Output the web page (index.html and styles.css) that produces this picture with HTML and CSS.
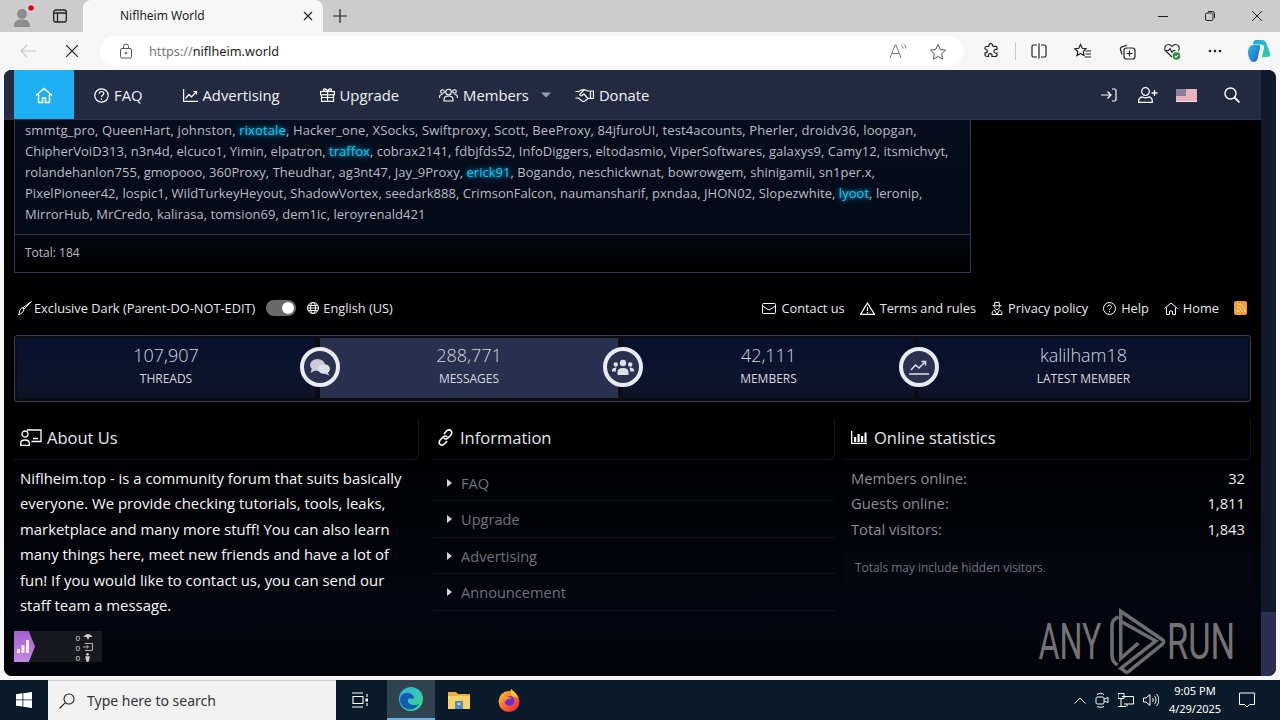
FILE: index.html
```html
<!DOCTYPE html>
<html>
<head>
  <meta charset="utf-8">
  <title>Niflheim World</title>
  <link rel="stylesheet" href="styles.css">
</head>
<body>
  <div class="tabstrip">
    <div class="strip-left">
      <svg class="profile" width="26" height="26" viewBox="0 0 26 26"><circle cx="12" cy="11" r="5" fill="#8c8c8c"/><path d="M4 24c0-6 3-7.500 8-7.500s8 1.500 8 7.500z" fill="#8c8c8c"/><circle cx="21" cy="5" r="4" fill="#ddd"/><circle cx="21" cy="5" r="2.800" fill="#e0000f"/></svg>
      <svg class="vtabs" width="16" height="16" viewBox="0 0 16 16" fill="none" stroke="#222" stroke-width="1.300"><rect x="1.700" y="2" width="12.600" height="12" rx="2"/><path d="M1.700 5h12.600M5.500 5v9" /></svg>
    </div>
    <div class="tab">
      <span class="tab-title">Niflheim World</span>
      <svg width="10" height="10" viewBox="0 0 10 10" stroke="#222" stroke-width="1.200"><path d="M1 1l8 8M9 1l-8 8"/></svg>
    </div>
    <svg class="newtab" width="16" height="16" viewBox="0 0 16 16" stroke="#222" stroke-width="1.200"><path d="M8 1v14M1 8h14"/></svg>
    <div class="winctl">
      <svg width="12" height="12" viewBox="0 0 12 12" stroke="#222"><path d="M1 6.500h10"/></svg>
      <svg width="12" height="12" viewBox="0 0 12 12" fill="none" stroke="#222"><rect x="1.500" y="3" width="7.500" height="7.500" rx="1.500"/><path d="M4 1.500h4.500a2 2 0 0 1 2 2v4.500"/></svg>
      <svg width="12" height="12" viewBox="0 0 12 12" stroke="#222"><path d="M1 1l10 10M11 1L1 11"/></svg>
    </div>
  </div>

  <div class="toolbar">
    <svg class="t-back" width="18" height="16" viewBox="0 0 18 16" fill="none" stroke="#c9c9c9" stroke-width="1.200"><path d="M17 8H2M8 2L2 8l6 6"/></svg>
    <svg class="t-stop" width="12" height="12" viewBox="0 0 12 12" stroke="#222" stroke-width="1.200"><path d="M0 0l12 12M12 0L0 12"/></svg>
    <div class="addressbar">
      <svg class="lock" width="14" height="16" viewBox="0 0 14 16" fill="none" stroke="#555"><rect x="1.500" y="5.500" width="11" height="9.500" rx="1.500"/><path d="M4.500 5.500V3.500a2.500 2.500 0 0 1 5 0v2"/><circle cx="7" cy="10" r=".8" fill="#555"/></svg>
      <span class="url"><span class="url-scheme">https://</span>niflheim.world</span>
      <div class="addr-actions">
        <svg width="18" height="16" viewBox="0 0 18 16" fill="none" stroke="#777"><path d="M1 15L6 2h1l5 13M3 10.500h7"/><path d="M12 2c1.500.8 2 2 2 3.500M14.500 1c1.500 1 2.500 2.500 2.500 4.500"/></svg>
        <svg width="18" height="17" viewBox="0 0 18 17" fill="none" stroke="#555"><path d="M9 1.500l2.300 4.900 5.200.7-3.800 3.700.9 5.300L9 13.500l-4.600 2.600.9-5.300L1.500 7.100l5.200-.7z"/></svg>
      </div>
    </div>
    <div class="toolbar-icons">
      <svg width="18" height="18" viewBox="0 0 18 18" fill="none" stroke="#222" stroke-width="1.200"><path d="M7 2.500c1-1.500 3.500-1 3.500.8 0 .7.500 1 1 1h2a1.500 1.500 0 0 1 1.500 1.500v1.700c-1.800-.5-3 .5-3 1.800s1.200 2.300 3 1.800v1.400a2 2 0 0 1-2 2H10c.5-1.800-.5-2.800-1.800-2.800S6 12.700 6.500 14.500H5a2 2 0 0 1-2-2V11c1.500 0 2.300-1 2.300-2S4.500 7 3 7V6a1.500 1.500 0 0 1 1.500-1.500H6c.8 0 1.300-1 1-2z"/></svg>
      <span class="tb-sep"></span>
      <svg width="16" height="16" viewBox="0 0 16 16" fill="none" stroke="#222" stroke-width="1.200"><path d="M6 2H2.500a1.500 1.500 0 0 0-1.500 1.500v9A1.500 1.500 0 0 0 2.500 14H6M10 2h3.500A1.500 1.500 0 0 1 15 3.500v9a1.500 1.500 0 0 1-1.500 1.500H10M8 .5v15"/></svg>
      <svg width="18" height="17" viewBox="0 0 18 17" fill="none" stroke="#222" stroke-width="1.200"><path d="M6.500 1.500l1.800 3.800 3.700.5-2.700 2.700.7 4-3.500-2-3.500 2 .7-4L1 5.800l3.800-.5zM11.500 8h5.500M11.500 11h5.500M11 14h6" /></svg>
      <svg width="17" height="17" viewBox="0 0 17 17" fill="none" stroke="#222" stroke-width="1.200"><path d="M3 11.500L1.500 6.500c-.4-1.300.3-2.400 1.400-2.700L8 2.200"/><rect x="5" y="5" width="11" height="11" rx="2.500"/><path d="M10.500 7.500v6M7.500 10.500h6"/></svg>
      <svg width="18" height="18" viewBox="0 0 18 18" fill="none" stroke="#222" stroke-width="1.100"><path d="M9 15L2.800 9C.5 6.500 2 2.500 5.500 2.500 7.300 2.500 8.300 3.500 9 4.500c.7-1 1.700-2 3.500-2C16 2.500 17.500 6.500 15.200 9"/><path d="M1.500 8.500h4l1.500-2 2 4 1.300-2h2"/><circle cx="13.500" cy="14" r="3.800" fill="#2b8a3e" stroke="none"/><path d="M11.800 14l1.300 1.300 2.200-2.400" stroke="#fff"/></svg>
      <svg width="14" height="4" viewBox="0 0 14 4" fill="#222"><circle cx="2" cy="2" r="1.300"/><circle cx="7" cy="2" r="1.300"/><circle cx="12" cy="2" r="1.300"/></svg>
      <svg class="copilot" width="24" height="24" viewBox="0 0 24 24"><defs><linearGradient id="cpA" x1="0" y1="0" x2="1" y2="1"><stop offset="0" stop-color="#1fa9e6"/><stop offset="1" stop-color="#2fd0a0"/></linearGradient><linearGradient id="cpB" x1="0" y1="0" x2="1" y2="1"><stop offset="0" stop-color="#2ac0d8"/><stop offset="1" stop-color="#2258d8"/></linearGradient></defs><path d="M9 1h6c3 0 4 2 5 5l3 8c.8 2.500-.5 4-3 4h-5l2-9c.5-2-1-3.500-3-3.500H6C6 3 7 1 9 1z" fill="url(#cpA)"/><path d="M1 13c0-4 2.500-7 5-7h5c2 0 2.500 1 2 3l-2.500 11c-.5 2-2 3-4 3-3.500 0-5.500-6-5.500-10z" fill="url(#cpB)"/></svg>
    </div>
  </div>

  <div class="viewport">
    <div class="page">
      <div class="site">
        <nav class="nav">
          <a class="nav-home">
            <svg width="18" height="17" viewBox="0 0 18 17" fill="none" stroke="#fff" stroke-width="1.500"><path d="M1 8.500L9 1.500l8 7M3.500 7v8.500h4v-4.500h3v4.500h4V7"/></svg>
          </a>
          <a class="nav-item">
            <svg width="15" height="15" viewBox="0 0 15 15" fill="none" stroke="#fff" stroke-width="1.200"><circle cx="7.500" cy="7.500" r="6.700"/><path d="M5.300 5.800c0-3 4.500-3 4.500-.3 0 1.700-2.300 1.700-2.300 3.500"/><path d="M7.500 10.300v1.400"/></svg>
            FAQ
          </a>
          <a class="nav-item">
            <svg width="15" height="13" viewBox="0 0 15 13" fill="none" stroke="#fff" stroke-width="1.200"><path d="M.6 0v12.400H15"/><path d="M2.500 9.500l3.500-4 2.500 2.500 4.500-5"/><path d="M10.500 2.500H13.500V5.500"/></svg>
            Advertising
          </a>
          <a class="nav-item">
            <svg width="15" height="14" viewBox="0 0 15 14" fill="none" stroke="#fff" stroke-width="1.200"><rect x=".6" y="3.500" width="13.800" height="3.300"/><path d="M1.500 6.800v6.600h12V6.800M7.500 3.500v10M1.500 9.500h12"/><path d="M7.500 3.500C5 3.500 3.500 3 3.500 1.800 3.500.3 6.500.3 7.500 3.500c1-3.200 4-3.200 4-1.700 0 1.200-1.500 1.700-4 1.700z"/></svg>
            Upgrade
          </a>
          <a class="nav-item nav-members">
            <svg width="19" height="14" viewBox="0 0 19 14" fill="none" stroke="#fff" stroke-width="1.100"><circle cx="9.500" cy="4" r="2.800"/><path d="M5 13v-1.500C5 9 7 8 9.500 8s4.500 1 4.500 3.500V13z"/><circle cx="3.500" cy="3.500" r="1.800"/><circle cx="15.500" cy="3.500" r="1.800"/><path d="M.6 10V8.500c0-1.500 1-2 2.900-2M18.400 10V8.500c0-1.500-1-2-2.900-2"/></svg>
            Members
            <svg class="caret" width="10" height="6" viewBox="0 0 10 6" fill="#9a9db0"><path d="M0 .5h10L5 5.500z"/></svg>
          </a>
          <a class="nav-item">
            <svg width="19" height="13" viewBox="0 0 19 13" fill="none" stroke="#fff" stroke-width="1.200"><path d="M.5 2.500h3l3-1.500c1.500-.5 3-.5 4 0l2 1h2.500M.5 9h3l3.500 3c1 .5 2 .5 3 0l3-2.500-4-4.500-2 1.500c-1.500 1-3-1-1.500-2L9 1"/><path d="M15.500 2h3v7.500h-3zM13 9.500h2.500"/></svg>
            Donate
          </a>
          <div class="nav-right">
            <svg width="16" height="14" viewBox="0 0 16 14" fill="none" stroke="#fff" stroke-width="1.200"><path d="M0 7h9.500M6.500 3.500L10 7l-3.500 3.500M11 1h2.500A1.500 1.500 0 0 1 15 2.500v9a1.500 1.500 0 0 1-1.500 1.500H11"/></svg>
            <svg class="nav-user" width="20" height="16" viewBox="0 0 20 16" fill="none" stroke="#fff" stroke-width="1.300"><circle cx="7.500" cy="4.500" r="3.800"/><path d="M.7 15.300v-1.500c0-2.300 2-3.800 3.500-3.800 1 .5 2 .8 3.300.8s2.300-.3 3.300-.8c1.500 0 3.500 1.500 3.500 3.800v1.500zM16.500 3v6M13.500 6h6"/></svg>
            <svg class="flag" width="21" height="13" viewBox="0 0 21 13"><rect width="21" height="13" fill="#f3dede"/><path d="M0 1h21M0 3h21M0 5h21M0 7h21M0 9h21M0 11h21" stroke="#e0868f" stroke-width="1"/><rect width="10" height="7" fill="#8a7f9e"/></svg>
            <svg class="nav-search" width="16" height="16" viewBox="0 0 16 16" fill="none" stroke="#fff" stroke-width="1.400"><circle cx="6.500" cy="6.500" r="5.500"/><path d="M10.500 10.500L15.500 15.500" stroke-width="1.800"/></svg>
          </div>
        </nav>

        <main class="main">
          <section class="online-panel">
            <div class="online-list">
              <div class="online-line"><span>smmtg_pro, QueenHart, johnston, </span><span class="glow">rixotale</span><span>, Hacker_one, XSocks, Swiftproxy, Scott, BeeProxy, 84jfuroUI, test4acounts, Pherler, droidv36, loopgan,</span></div>
              <div class="online-line"><span>ChipherVoiD313, n3n4d, elcuco1, Yimin, elpatron, </span><span class="glow">traffox</span><span>, cobrax2141, fdbjfds52, InfoDiggers, eltodasmio, ViperSoftwares, galaxys9, Camy12, itsmichvyt,</span></div>
              <div class="online-line"><span>rolandehanlon755, gmopooo, 360Proxy, Theudhar, ag3nt47, Jay_9Proxy, </span><span class="glow">erick91</span><span>, Bogando, neschickwnat, bowrowgem, shinigamii, sn1per.x,</span></div>
              <div class="online-line"><span>PixelPioneer42, lospic1, WildTurkeyHeyout, ShadowVortex, seedark888, CrimsonFalcon, naumansharif, pxndaa, JHON02, Slopezwhite, </span><span class="glow">lyoot</span><span>, leronip,</span></div>
              <div class="online-line"><span>MirrorHub, MrCredo, kalirasa, tomsion69, dem1ic, leroyrenald421</span></div>
            </div>
            <div class="online-total">Total: 184</div>
          </section>

          <div class="foot-row">
            <div class="foot-left">
              <span class="foot-link">
                <svg width="14" height="14" viewBox="0 0 14 14" fill="none" stroke="#fff"><path d="M13.500.5L6 8 4.800 6.800zM6 8c-.5 3-3 5.500-5.500 5.500C2 12 .5 10 3 7.500c1-1 1.800-.7 3 .5z"/></svg>
                Exclusive Dark (Parent-DO-NOT-EDIT)
              </span>
              <span class="switch"><span class="knob"></span></span>
              <span class="foot-link">
                <svg width="12" height="12" viewBox="0 0 12 12" fill="none" stroke="#fff"><circle cx="6" cy="6" r="5.500"/><ellipse cx="6" cy="6" rx="2.500" ry="5.500"/><path d="M.5 6h11M1.200 3.500h9.600M1.200 8.500h9.600"/></svg>
                English (US)
              </span>
            </div>
            <div class="foot-right">
              <span class="foot-link"><svg width="14" height="11" viewBox="0 0 14 11" fill="none" stroke="#fff"><rect x=".5" y=".5" width="13" height="10" rx="1"/><path d="M.5 3l6.500 4 6.500-4"/></svg>Contact us</span>
              <span class="foot-link"><svg width="15" height="13" viewBox="0 0 15 13" fill="none" stroke="#fff" stroke-width="1.200"><path d="M7.500 1L14.500 12.400H.5zM7.500 5v4M7.500 10v1.200"/></svg>Terms and rules</span>
              <span class="foot-link"><svg width="12" height="14" viewBox="0 0 12 14" fill="none" stroke="#fff"><path d="M3.500 4.500L4 1l2 .7L8 1l.5 3.500M1.500 4.800h9M3.500 5.500c0 4 5 4 5 0M1 13.500c0-2.500 1-4 2.500-4.500L6 13.500 8.500 9c1.500.5 2.500 2 2.500 4.500z"/></svg>Privacy policy</span>
              <span class="foot-link"><svg width="13" height="13" viewBox="0 0 13 13" fill="none" stroke="#fff"><circle cx="6.500" cy="6.500" r="6"/><path d="M4.500 5c0-2.500 4-2.500 4-.3 0 1.500-2 1.500-2 3.300M6.500 9v1.200"/></svg>Help</span>
              <span class="foot-link"><svg width="14" height="13" viewBox="0 0 14 13" fill="none" stroke="#fff"><path d="M.5 6.500L7 1l6.500 5.500M2.500 5.500v7h3V9h3v3.500h3v-7"/></svg>Home</span>
              <span class="rss"><svg width="10" height="10" viewBox="0 0 10 10" fill="none" stroke="#fff" stroke-opacity=".6"><path d="M1 1a8 8 0 0 1 8 8M1 4a5 5 0 0 1 5 5"/><circle cx="2" cy="8" r="1" fill="#fff" stroke="none"/></svg></span>
            </div>
          </div>

          <section class="stats">
            <div class="stat">
              <div class="stat-num">107,907</div>
              <div class="stat-label">THREADS</div>
              <span class="stat-badge"><svg width="22" height="18" viewBox="0 0 22 18" fill="#c9cbd8"><ellipse cx="8.500" cy="7" rx="7.500" ry="6"/><path d="M3 10L1.500 15 7 12z"/><ellipse cx="15" cy="11" rx="6" ry="4.800" fill="#dfe1ea"/><path d="M18 14l2.500 3.500L14 15z" fill="#dfe1ea"/></svg></span>
            </div>
            <div class="stat stat-active">
              <div class="stat-num">288,771</div>
              <div class="stat-label">MESSAGES</div>
              <span class="stat-badge"><svg width="22" height="17" viewBox="0 0 22 17" fill="#dfe1ea"><circle cx="11" cy="4" r="3.200"/><circle cx="3.800" cy="5.500" r="2.200"/><circle cx="18.200" cy="5.500" r="2.200"/><path d="M5.500 16v-3c0-2.500 2-4 5.500-4s5.500 1.500 5.500 4v3zM0 11.500C0 9.500 1.500 8.500 4.500 8.500 4 10 3.800 11 3.800 12.500H0zM22 11.500c0-2-1.500-3-4.500-3 .5 1.500.7 2.500.7 4H22z"/></svg></span>
            </div>
            <div class="stat">
              <div class="stat-num">42,111</div>
              <div class="stat-label">MEMBERS</div>
              <span class="stat-badge"><svg width="20" height="16" viewBox="0 0 20 16" fill="none" stroke="#dfe1ea" stroke-width="1.500"><path d="M0 15h20"/><path d="M2 11l4.500-5 3.500 3 6-6"/><path d="M12.500 2.500h4v4"/></svg></span>
            </div>
            <div class="stat">
              <div class="stat-num">kalilham18</div>
              <div class="stat-label">LATEST MEMBER</div>
            </div>
          </section>

          <div class="columns">
            <section class="col col-about">
              <h3 class="col-head">
                <svg width="22" height="17" viewBox="0 0 22 17" fill="none" stroke="#fff" stroke-width="1.300"><circle cx="5" cy="5" r="3"/><path d="M.7 16.300v-2c0-2 1.800-3.300 4.300-3.300s4.300 1.300 4.300 3.300v2zM7 1h14v11.500H11.500M13 9.500h5"/></svg>
                About Us
              </h3>
              <p class="about-text">Niflheim.top - is a community forum that suits basically everyone. We provide checking tutorials, tools, leaks, marketplace and many more stuff! You can also learn many things here, meet new friends and have a lot of fun! If you would like to contact us, you can send our staff team a message.</p>
            </section>
            <section class="col col-info">
              <h3 class="col-head">
                <svg width="17" height="17" viewBox="0 0 17 17" fill="none" stroke="#fff" stroke-width="1.600"><path d="M7 5l2-2.500c2-2 4-1.800 5-.8s1.200 3-.8 5L11 9c-1.500 1.500-3.500 1.300-4.500-.3"/><path d="M10 12l-2 2.500c-2 2-4 1.800-5 .8s-1.200-3 .8-5L6 8c1.500-1.500 3.500-1.300 4.500.3"/></svg>
                Information
              </h3>
              <ul class="info-list">
                <li>FAQ</li>
                <li>Upgrade</li>
                <li>Advertising</li>
                <li>Announcement</li>
              </ul>
            </section>
            <section class="col col-stats">
              <h3 class="col-head">
                <svg width="16" height="13" viewBox="0 0 16 13" fill="#fff"><path d="M0 0h1.300v11.700H16V13H0z"/><path d="M3 6h2.200v5H3zM6.500 3h2.200v8H6.500zM10 5h2.200v6H10zM13.500 1.500h2v9.500h-2z"/></svg>
                Online statistics
              </h3>
              <dl class="stat-list">
                <div class="stat-row"><dt>Members online:</dt><dd>32</dd></div>
                <div class="stat-row"><dt>Guests online:</dt><dd>1,811</dd></div>
                <div class="stat-row"><dt>Total visitors:</dt><dd>1,843</dd></div>
              </dl>
              <div class="stat-note">Totals may include hidden visitors.</div>
            </section>
          </div>

          <div class="counter">
            <span class="counter-logo"><svg width="12" height="13" viewBox="0 0 12 13" fill="#fff" fill-opacity=".85"><path d="M0 9h3v4H0zM4.500 5h3v8h-3zM9 0h3v13H9z"/></svg></span>
            <div class="counter-rows">
              <div class="counter-row">0<svg width="10" height="6" viewBox="0 0 11 7" fill="#ccc"><path d="M0 3.500C2 1 4 0 5.500 0S9 1 11 3.500H7L5.500 7 4 3.500z"/></svg></div>
              <div class="counter-row">0<svg width="10" height="8" viewBox="0 0 11 9" fill="none" stroke="#ccc"><path d="M2 .5h8.500v8H2M0 4.500h6M4 2.500l2 2-2 2"/></svg></div>
              <div class="counter-row">0<svg width="10" height="9" viewBox="0 0 11 10" fill="#ccc"><circle cx="5" cy="1.500" r="1.500"/><path d="M2.500 3.500h5L7 7 6 10H4L3 7z"/></svg></div>
            </div>
          </div>
        </main>

        <div class="watermark">
          <span class="wm-text wm-any">ANY</span>
          <svg width="62" height="68" viewBox="0 0 56 62" fill="none" stroke="#6d6d70" stroke-width="3.200"><path d="M13 8C8 10 7 12 7 18v25c0 5 2 7 5 9"/><path d="M15 3l38 26c1.500 1 1.500 2.500 0 4L22 58c-1.500 1-3 .5-4-1l-3-2 32-25L15 12z"/><path d="M15 12v34l16-14"/></svg>
          <span class="wm-text wm-run">RUN</span>
        </div>
      </div>
      <div class="scrollbar"><div class="scroll-thumb"></div></div>
    </div>
  </div>

  <footer class="taskbar">
    <div class="start"><svg width="16" height="16" viewBox="0 0 16 16" fill="#fff"><path d="M0 2.200L6.500 1.300V7.500H0zM7.300 1.200L16 0v7.500H7.300zM0 8.300h6.500v6.300L0 13.700zM7.300 8.300H16V16l-8.700-1.200z"/></svg></div>
    <div class="search">
      <svg width="16" height="16" viewBox="0 0 16 16" fill="none" stroke="#222" stroke-width="1.100"><circle cx="10" cy="6" r="5"/><path d="M6.300 9.700L.5 15.500"/></svg>
      <span>Type here to search</span>
    </div>
    <div class="task-icon task-view"><svg width="16" height="16" viewBox="0 0 16 16" fill="none" stroke="#fff" stroke-width="1.100"><path d="M0 1h11M0 15h11M1 4.500h10v7H1z"/><path d="M15 2v3M15 11v3" /><rect x="13.500" y="6.500" width="2.500" height="3" fill="#fff" stroke="none"/></svg></div>
    <div class="task-icon task-edge">
      <svg width="24" height="24" viewBox="0 0 24 24"><defs><linearGradient id="edgeA" x1="0" y1="0" x2="1" y2="1"><stop offset="0" stop-color="#2fb5e8"/><stop offset="1" stop-color="#3ed68a"/></linearGradient></defs><circle cx="12" cy="12" r="12" fill="url(#edgeA)"/><path d="M1 13C1 8 5 5.500 9 6c4 .5 6 3 6 5.500H9c-1 3 1 6.500 6 6.500 2 0 4-.5 5-1.500-2 4-5 6-8.500 6C6 22.500 1 18 1 13z" fill="#0f5cb0"/></svg>
    </div>
    <div class="task-icon task-files"><svg width="22" height="20" viewBox="0 0 22 20"><path d="M0 2h8l2 2h12v4H0z" fill="#e8b040"/><rect y="6" width="22" height="13" fill="#f8d468"/><rect x="7" y="11" width="8" height="8" fill="#4a8fc8"/><rect x="9.500" y="13" width="3" height="2" fill="#f8d468"/></svg></div>
    <div class="task-icon task-fox"><svg width="24" height="24" viewBox="0 0 24 24"><defs><linearGradient id="foxA" x1="0" y1="0" x2="1" y2="1"><stop offset="0" stop-color="#ffc93c"/><stop offset=".5" stop-color="#ff6a2b"/><stop offset="1" stop-color="#e3174f"/></linearGradient></defs><circle cx="12" cy="13.500" r="10.500" fill="url(#foxA)"/><path d="M14 1c3 2 6 5 7 9l-6-2c-1-2-2-4-1-7z" fill="#ffc93c"/><circle cx="12.500" cy="13" r="5" fill="#6b2fd0"/><path d="M6 10c3-2 7-2 9 1-3-1-6 0-7 3z" fill="#ff8c2b"/></svg></div>
    <div class="tray">
      <svg width="12" height="7" viewBox="0 0 12 7" fill="none" stroke="#fff"><path d="M.5 6.500L6 1l5.500 5.500"/></svg>
      <svg width="14" height="16" viewBox="0 0 14 16" fill="none" stroke="#fff"><rect x="1" y="5" width="8" height="7" rx="1.500"/><path d="M9 7l4-1.500v5L9 9M2 2.500C4 1 7 1 9 2.500M2 14.500c2 1 5 1 7 0"/></svg>
      <svg width="16" height="14" viewBox="0 0 16 14" fill="none" stroke="#fff"><path d="M4 3.500h11.500v7.500H6M0 .5h6v5H0zM3 5.500v8M0 13.500h8M9 11v2.500"/></svg>
      <svg width="16" height="14" viewBox="0 0 16 14" fill="none" stroke="#fff"><path d="M.5 5v4h2.500L7 12.500v-11L3 5zM9.500 5c1 1 1 3 0 4M11.500 3c2 2 2 6 0 8M13.500 1c3 3 3 9 0 12"/></svg>
    </div>
    <div class="clock">
      <div>9:05 PM</div>
      <div>4/29/2025</div>
    </div>
    <svg class="notif" width="16" height="16" viewBox="0 0 16 16" fill="none" stroke="#fff"><path d="M.5 1h15v11.500h-5L8 15l-2.500-2.500h-5z"/></svg>
  </footer>
</body>
</html>
```

FILE: styles.css
```css
* {
  box-sizing: border-box;
}

html, body {
  margin: 0;
  height: 720px;
  overflow: hidden;
}

body {
  display: flex;
  flex-direction: column;
  width: 1280px;
  background: #f7f7f7;
  font-family: "Open Sans", sans-serif;
}

svg {
  flex: none;
  display: block;
}

/* browser window */
.tabstrip {
  display: flex;
  align-items: flex-end;
  height: 32px;
  background: #cccccc;
}

.strip-left {
  display: flex;
  align-items: center;
  justify-content: space-between;
  width: 83px;
  height: 32px;
  padding: 0 15px 0 10px;
}

.tab {
  display: flex;
  align-items: center;
  justify-content: space-between;
  width: 240px;
  height: 32px;
  padding: 0 10px 1px 37px;
  background: #f7f7f7;
  border-radius: 8px 8px 0 0;
  font-family: "Noto Sans", sans-serif;
  font-size: 12px;
  color: #222;
}

.newtab {
  margin: 0 0 8px 9px;
}

.winctl {
  display: flex;
  gap: 35px;
  margin: 0 17px 10px auto;
}

.toolbar {
  display: flex;
  align-items: center;
  height: 38px;
  padding-left: 19px;
  background: #f7f7f7;
}

.t-stop {
  margin-left: 29px;
}

.addressbar {
  display: flex;
  align-items: center;
  width: 863px;
  height: 30px;
  margin-left: 22px;
  padding: 0 16px 0 19px;
  background: #fff;
  border-radius: 15px;
}

.url {
  margin-left: 16px;
  font-family: "Noto Sans", sans-serif;
  font-size: 12.700px;
  color: #222;
}

.url-scheme {
  color: #777;
}

.addr-actions {
  display: flex;
  gap: 22px;
  margin-left: auto;
}

.toolbar-icons {
  display: flex;
  align-items: center;
  gap: 27px;
  margin-left: 19px;
}

.tb-sep {
  width: 1px;
  height: 18px;
  margin: 0 -12px;
  background: #c8c8c8;
}

.copilot {
  margin-left: -2px;
}

.viewport {
  display: flex;
  height: 610px;
  padding: 0 4px 4px;
}

.page {
  display: flex;
  flex: 1;
  overflow: hidden;
  border-radius: 8px;
  background: #000;
}

.site {
  position: relative;
  flex: none;
  width: 1257px;
  height: 606px;
  background: linear-gradient(#000 60%, #03060f 90%, #020308);
}

.scrollbar {
  display: flex;
  flex: 1;
  align-items: flex-end;
  background: #101a2c;
}

.scroll-thumb {
  width: 100%;
  height: 64px;
  background: #2b3050;
}

/* site nav */
.nav {
  display: flex;
  align-items: center;
  height: 50px;
  padding-left: 10px;
  background: #252a43;
  border-bottom: 1px solid #2e3348;
  color: #f2f2f4;
  font-size: 14.800px;
}

.nav-home {
  display: flex;
  align-items: center;
  justify-content: center;
  width: 60px;
  height: 49px;
  padding-top: 1px;
  background: #1eaef2;
}

.nav-item {
  display: flex;
  align-items: center;
  gap: 5px;
  padding: 1px 20px 0;
  line-height: 48px;
}

.caret {
  margin-left: 7px;
}

.nav-members {
  padding-right: 4px;
}

.nav-right {
  display: flex;
  align-items: center;
  margin-left: auto;
  padding: 1px 21px 0 0;
}

.nav-user {
  margin-left: 21px;
}

.flag {
  margin-left: 18px;
}

.nav-search {
  margin-left: 27px;
}

/* main column */
.main {
  padding: 0 10px;
}

.online-panel {
  width: 957px;
  border: 1px solid #2f3650;
  border-top: 0;
  color: #b9bcc6;
  font-size: 13px;
}

.online-list {
  height: 115px;
  padding: 0 10px;
  line-height: 21px;
  letter-spacing: .03px;
  background: linear-gradient(#070d1c, #050a16);
  border-bottom: 1px solid #2f3650;
}

.online-line {
  white-space: pre;
}

.online-line:first-child {
  letter-spacing: .13px;
}

.glow {
  color: #15c3e6;
  text-shadow: 0 0 8px #0f9fd0, 0 0 3px #0f9fd0;
}

.online-total {
  height: 37px;
  padding-left: 10px;
  font-size: 12px;
  line-height: 36px;
  background: linear-gradient(#050811, #000);
}

.foot-row {
  display: flex;
  align-items: center;
  justify-content: space-between;
  height: 20px;
  margin: 25px 0 17px;
  padding: 0 4px;
  color: #e6e7ec;
  font-size: 12.800px;
}

.foot-left, .foot-right {
  display: flex;
  align-items: center;
}

.foot-left {
  gap: 11px;
}

.foot-right {
  gap: 15px;
}

.foot-link {
  display: flex;
  align-items: center;
  gap: 5px;
}

.foot-left .foot-link {
  gap: 2px;
}

.foot-left .foot-link + .switch + .foot-link {
  gap: 4px;
}

.switch {
  display: flex;
  align-items: center;
  justify-content: flex-end;
  width: 30px;
  height: 16px;
  padding-right: 2px;
  background: #6a6a6a;
  border-radius: 8px;
}

.knob {
  width: 12px;
  height: 12px;
  background: #fff;
  border-radius: 50%;
}

.rss {
  display: flex;
  align-items: center;
  justify-content: center;
  width: 13px;
  height: 14px;
  background: #f0a030;
  border-radius: 2px;
}

/* stats strip */
.stats {
  display: grid;
  grid-template-columns: 298px 298px 291px 1fr;
  gap: 5px;
  height: 67px;
  padding: 2px;
  background: #0c0d12;
  border: 1px solid #3a3e4e;
  border-radius: 3px;
}

.stat {
  position: relative;
  height: 60px;
  padding-top: 6px;
  background: linear-gradient(#07122f, #0f1329);
  text-align: center;
  color: #d6d7de;
}

.stat-active {
  background: #2a3050;
}

.stat-num {
  font-size: 18px;
  font-weight: 300;
  line-height: 23px;
}

.stat-label {
  margin-top: 3px;
  font-size: 12px;
  line-height: 18px;
}

.stat-badge {
  position: absolute;
  top: 9px;
  right: -25px;
  z-index: 1;
  display: flex;
  align-items: center;
  justify-content: center;
  width: 40px;
  height: 40px;
  background: #2c3150;
  border: 4px solid #e9ebf6;
  border-radius: 50%;
}

/* bottom columns */
.columns {
  display: flex;
  margin-top: 18px;
}

.col-about {
  width: 405px;
}

.col-info {
  width: 402px;
  margin-left: 14px;
}

.col-stats {
  width: 406px;
  margin-left: 10px;
}

.col-head {
  display: flex;
  align-items: center;
  gap: 5px;
  height: 40px;
  margin: 0;
  padding: 0 0 4px 6px;
  border-right: 1px solid #14161e;
  border-bottom: 1px solid #14161e;
  border-radius: 0 0 6px 0;
  color: #e6e7ec;
  font-size: 16.500px;
  font-weight: 400;
}

.col-info .col-head {
  gap: 6px;
  padding-left: 4px;
}

.col-stats .col-head {
  gap: 7px;
}

.about-text {
  margin: 5.500px 0 0;
  padding: 0 12px 0 6px;
  color: #f8f8fa;
  font-size: 14.900px;
  line-height: 25.500px;
}

.info-list {
  margin: 4.500px 0 0;
  padding: 0;
  list-style: none;
  color: #6f727f;
  font-size: 14.600px;
}

.info-list li {
  position: relative;
  height: 36.500px;
  padding-left: 28px;
  line-height: 36px;
  border-bottom: 1px solid #0f131f;
}

.info-list li::before {
  content: "";
  position: absolute;
  top: 14px;
  left: 14px;
  border-left: 5px solid #d6d6da;
  border-top: 4px solid transparent;
  border-bottom: 4px solid transparent;
}

.stat-list {
  margin: 5.500px 0 0;
  padding: 0 6px;
  font-size: 14.750px;
  line-height: 25.500px;
}

.stat-row {
  display: flex;
  justify-content: space-between;
}

.stat-row dt {
  color: #8a8d99;
}

.stat-row dd {
  margin: 0;
  color: #eceded;
}

.stat-note {
  margin-top: 9px;
  padding: 0 10px;
  color: #6f727f;
  font-size: 11.900px;
  line-height: 33px;
  background: #05070f;
}

/* hit counter */
.counter {
  display: flex;
  justify-content: space-between;
  width: 88px;
  height: 31px;
  margin-top: 12.500px;
  padding-right: 9px;
  background: #17191f;
}

.counter-logo {
  display: flex;
  align-items: center;
  width: 21px;
  padding-left: 3px;
  background: linear-gradient(#a45fd0, #c48ae0);
  clip-path: polygon(0 0, 70% 0, 100% 50%, 70% 100%, 0 100%);
}

.counter-rows {
  padding-top: 1px;
}

.counter-row {
  display: flex;
  align-items: center;
  gap: 3px;
  height: 10px;
  color: #ddd;
  font-size: 8px;
}

/* anyrun logo sits over the page */
.watermark {
  position: absolute;
  right: 29px;
  bottom: 0;
  display: flex;
  align-items: center;
  color: #737376;
}

.wm-text {
  display: flex;
  justify-content: center;
  width: 62px;
  font-family: "Roboto", sans-serif;
  font-size: 50px;
  font-weight: 400;
  line-height: 62px;
  white-space: nowrap;
  transform-origin: center;
}

.wm-any {
  margin-right: 3px;
  transform: scaleX(.645);
}

.wm-run {
  margin-left: 4px;
  transform: scaleX(.69);
}

/* windows taskbar */
.taskbar {
  display: flex;
  align-items: center;
  height: 40px;
  background: #0a1c2b;
  color: #fff;
}

.start {
  display: flex;
  align-items: center;
  justify-content: center;
  width: 48px;
  height: 40px;
}

.search {
  display: flex;
  align-items: center;
  gap: 12px;
  width: 288px;
  height: 40px;
  padding-left: 11px;
  background: #f2f2f2;
  border-top: 1px solid #d0d0d0;
  color: #333;
  font-family: "Noto Sans", sans-serif;
  font-size: 14px;
}

.task-icon {
  display: flex;
  align-items: center;
  justify-content: center;
  width: 48px;
  height: 40px;
}

.task-edge {
  margin-left: 3px;
  background: #2f4450;
  border-bottom: 2px solid #6fb1de;
}

.task-fox {
  margin-left: 2px;
}

.tray {
  display: flex;
  align-items: center;
  gap: 9px;
  margin-left: auto;
}

.clock {
  width: 54px;
  margin: 0 17px 0 9px;
  font-family: "Noto Sans", sans-serif;
  font-size: 11px;
  line-height: 18px;
  text-align: center;
}

.notif {
  margin: 0 25px 0 0;
}
```
